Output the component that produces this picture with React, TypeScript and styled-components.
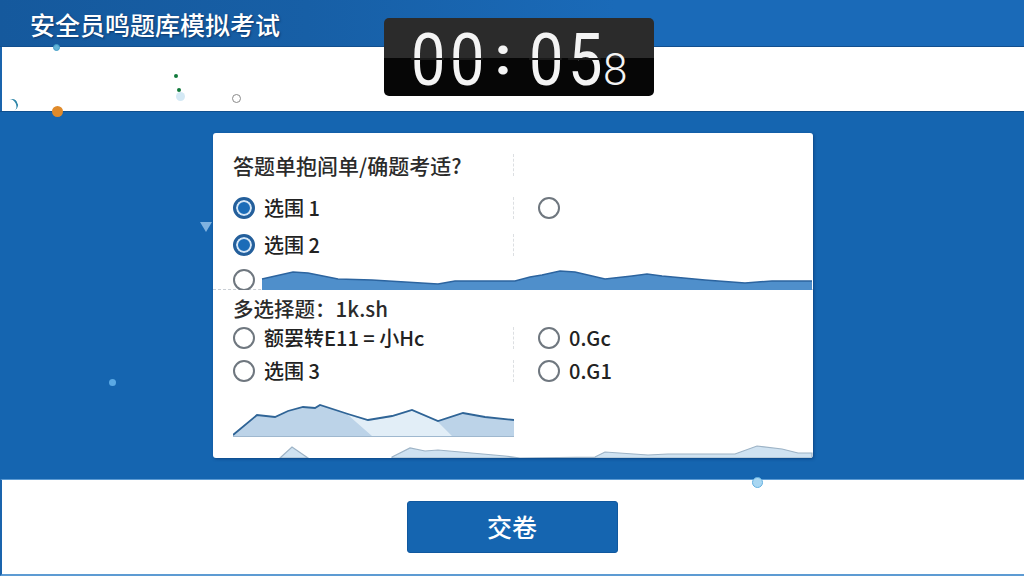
import React from 'react';
import styled, { createGlobalStyle } from 'styled-components';

const CJK = '"Noto Sans CJK SC", "Noto Sans", sans-serif';

const GlobalStyle = createGlobalStyle`
  html, body {
    margin: 0;
    padding: 0;
    background: #ffffff;
  }
`;

const Stage = styled.div`
  position: relative;
  width: 1024px;
  height: 576px;
  overflow: hidden;
  display: flex;
  flex-direction: column;
  font-family: ${CJK};
  color: #222;
  background: #ffffff;
`;

const Header = styled.header`
  height: 47px;
  box-sizing: border-box;
  padding-left: 30px;
  display: flex;
  align-items: center;
  background: linear-gradient(90deg, #15599d 0%, #175fa6 30%, #1a6ab8 60%, #1a6ab8 100%);
  border-bottom: 1px solid #124f8e;
`;

const Title = styled.h1`
  margin: 2px 0 0;
  font-size: 25px;
  line-height: 32px;
  font-weight: 500;
  color: #ffffff;
  text-shadow: 1px 1px 2px rgba(5, 30, 70, 0.6);
`;

const Band = styled.div`
  height: 64px;
  background: #ffffff;
  border-left: 2px solid #1a64ad;
`;

const Main = styled.main`
  height: 368px;
  box-sizing: border-box;
  padding: 22px 0 0 2px;
  display: flex;
  justify-content: center;
  align-items: flex-start;
  background: #1565b0;
  border-top: 1px solid #10508f;
`;

const Card = styled.section`
  width: 600px;
  height: 325px;
  margin-top: -1px;
  display: flex;
  flex-direction: column;
  border-radius: 3px;
  overflow: hidden;
  background: #ffffff;
  box-shadow: 1px 1px 3px rgba(5, 40, 90, 0.5);
`;

const Upper = styled.div`
  height: 157px;
  flex: none;
  box-sizing: border-box;
  padding: 18px 0 0 20px;
  border-bottom: 1px dashed #c9ced4;
`;

const Lower = styled.div`
  flex: 1;
  min-height: 0;
  box-sizing: border-box;
  padding: 4px 0 0 20px;
  display: flex;
  flex-direction: column;
`;

const Row = styled.div<{ $height: number }>`
  display: grid;
  grid-template-columns: 281px 1fr;
  align-items: center;
  height: ${({ $height }) => $height}px;
`;

const Heading = styled.div<{ $size: number }>`
  font-size: ${({ $size }) => $size}px;
  line-height: 28px;
  font-weight: 500;
  color: #2b2b2b;
  white-space: nowrap;
`;

const LeftCell = styled.div`
  display: flex;
  align-items: center;
  gap: 9px;
`;

const RightCell = styled.div`
  height: 22px;
  box-sizing: border-box;
  padding-left: 24px;
  margin-left: -1px;
  display: flex;
  align-items: center;
  gap: 9px;
  border-left: 1px dashed #dcdfe2;
`;

const Radio = styled.span<{ $checked?: boolean }>`
  flex: none;
  width: 22px;
  height: 22px;
  box-sizing: border-box;
  border-radius: 50%;
  border: ${({ $checked }) => ($checked ? '3px solid #245f9b' : '2.5px solid #6f777f')};
  background: ${({ $checked }) => ($checked ? '#1b6cb8' : '#ffffff')};
  box-shadow: ${({ $checked }) => ($checked ? 'inset 0 0 0 2px #d5e6f6' : 'none')};
`;

const Label = styled.span`
  font-size: 20px;
  line-height: 24px;
  font-weight: 500;
  color: #222;
  white-space: nowrap;
`;

const Spacer = styled.div`
  height: 10px;
`;

const WaveRow = styled.div`
  height: 21px;
  margin-top: 6px;
  display: flex;
  align-items: flex-start;
  gap: 6px;
  overflow: hidden;
`;

const ChartBox = styled.div`
  width: 281px;
  height: 33px;
  margin-top: 17px;
  flex: none;
`;

const FootWave = styled.div`
  height: 13px;
  margin-top: auto;
  margin-left: -20px;
  flex: none;
`;

const Graphic = styled.svg`
  display: block;
  flex: 1;
  width: 100%;
  height: 100%;
`;

const Footer = styled.footer`
  flex: 1;
  display: flex;
  justify-content: center;
  box-sizing: border-box;
  padding: 21px 2px 0 0;
  background: #ffffff;
  border-top: 1px solid #5d9bd3;
  border-left: 2px solid #1a64ad;
  border-bottom: 2px solid #5d9bd3;
`;

const Submit = styled.button`
  width: 211px;
  height: 52px;
  border: 1px solid #10589f;
  border-radius: 3px;
  background: #1565b0;
  color: #ffffff;
  font-family: ${CJK};
  font-size: 25px;
  line-height: 30px;
  font-weight: 500;
  padding: 0 0 2px;
`;

const Timer = styled.div`
  position: absolute;
  left: 384px;
  top: 18px;
  width: 270px;
  height: 78px;
  box-sizing: border-box;
  padding-left: 24px;
  display: flex;
  align-items: flex-start;
  border-radius: 5px;
  color: #f4f4f4;
  font-family: Roboto, sans-serif;
  background: linear-gradient(180deg, #2b2b2b 0, #2b2b2b 40px, #060606 40px, #060606 100%);
`;

const Digit = styled.span`
  position: relative;
  width: 38.5px;
  height: 78px;
  flex: none;
  text-align: center;
  font-size: 73px;
  line-height: 84px;
  font-weight: 400;
  transform: scaleX(0.84);

  &::after {
    content: '';
    position: absolute;
    left: 0;
    right: 0;
    top: 40px;
    height: 2px;
    background: #1a1a1a;
  }
`;

const Colon = styled.span`
  width: 36px;
  height: 78px;
  margin-right: 5px;
  flex: none;
  text-align: center;
  font-size: 52px;
  line-height: 78px;
  font-weight: 900;
`;

const Seconds = styled.span`
  font-size: 44px;
  line-height: 50px;
  margin-top: 27px;
  font-weight: 300;
`;

const Speck = styled.i<{ $size: number; $color: string; $ring?: string }>`
  position: absolute;
  width: ${({ $size }) => $size}px;
  height: ${({ $size }) => $size}px;
  box-sizing: border-box;
  border-radius: 50%;
  background: ${({ $color }) => $color};
  border: ${({ $ring }) => ($ring ? `1.5px solid ${$ring}` : 'none')};
`;

const Pointer = styled.i`
  position: absolute;
  left: 200px;
  top: 222px;
  width: 0;
  height: 0;
  border-left: 6px solid transparent;
  border-right: 6px solid transparent;
  border-top: 10px solid #7fb2e0;
`;

const Sliver = styled.i`
  position: absolute;
  left: 6px;
  top: 99px;
  width: 12px;
  height: 12px;
  box-sizing: border-box;
  border-radius: 50%;
  border-right: 2px solid #2f86a8;
  transform: rotate(-25deg);
`;

const specks = [
  { x: 53, y: 44, size: 7, color: '#63b4d8', ring: '#3f9cc6' },
  { x: 52, y: 106, size: 11, color: '#e08a2a' },
  { x: 174, y: 74, size: 4, color: '#127a3c' },
  { x: 177, y: 88, size: 4, color: '#127a3c' },
  { x: 176, y: 92, size: 9, color: '#d4e9f5' },
  { x: 232, y: 94, size: 9, color: '#ffffff', ring: '#8a8a8a' },
  { x: 109, y: 379, size: 7, color: '#5ba9e4' },
  { x: 752, y: 477, size: 11, color: '#a9d7f2', ring: '#63b0e0' },
];

const TopWave = () => (
  <Graphic viewBox="261 268 552 21" preserveAspectRatio="none">
    <path
      d="M262 278 L293 271 L308 272 L338 278 L372 279 L438 283 L455 280 L515 280 L530 276 L542 274 L560 270 L575 271 L605 278 L632 275 L647 273 L662 275 L705 279 L745 282 L772 280 L812 280 L812 289 L262 289 Z"
      fill="#4f8fcb"
    />
    <path
      d="M262 278 L293 271 L308 272 L338 278 L372 279 L438 283 L455 280 L515 280 L530 276 L542 274 L560 270 L575 271 L605 278 L632 275 L647 273 L662 275 L705 279 L745 282 L772 280 L812 280"
      fill="none"
      stroke="#2c649f"
      strokeWidth="1.5"
    />
  </Graphic>
);

const MidChart = () => (
  <Graphic viewBox="233 404 281 33" preserveAspectRatio="none">
    <path
      d="M233 434 L257 415 L275 417 L288 411 L303 407 L315 408 L320 405 L348 414 L368 420 L392 416 L412 410 L438 421 L463 413 L485 417 L514 420 L514 436 L233 436 Z"
      fill="#bcd3e8"
    />
    <path d="M348 415 L368 421 L392 417 L412 411 L438 422 L452 436 L372 436 Z" fill="#e2eef7" />
    <path
      d="M233 435 L257 415 L275 417 L288 411 L303 407 L315 408 L320 405 L348 414 L368 420 L392 416 L412 410 L438 421 L463 413 L485 417 L514 420"
      fill="none"
      stroke="#2f6496"
      strokeWidth="1.8"
    />
    <path d="M233 436.5 L514 436.5" stroke="#9fb8cf" strokeWidth="1" />
  </Graphic>
);

const BottomWave = () => (
  <Graphic viewBox="213 445 600 13" preserveAspectRatio="none">
    <path
      d="M280 458 L292 447 L308 458 Z M392 457 L410 448 L425 451 L438 450 L505 456 L520 458 L595 457 L605 452 L648 455 L668 454 L735 454 L757 446 L782 449 L798 453 L812 453 L812 458 L392 458 Z"
      fill="#cfe2f1"
      stroke="#9db3c6"
      strokeWidth="1.2"
    />
  </Graphic>
);

export default function App() {
  return (
    <Stage>
      <GlobalStyle />
      <Header>
        <Title>安全员鸣题库模拟考试</Title>
      </Header>
      <Band />
      <Main>
        <Card>
          <Upper>
            <Row $height={28}>
              <Heading $size={21}>答题单抱闾单/确题考适?</Heading>
              <RightCell />
            </Row>
            <Spacer />
            <Row $height={37}>
              <LeftCell>
                <Radio $checked />
                <Label>选围 1</Label>
              </LeftCell>
              <RightCell>
                <Radio />
              </RightCell>
            </Row>
            <Row $height={37}>
              <LeftCell>
                <Radio $checked />
                <Label>选围 2</Label>
              </LeftCell>
              <RightCell />
            </Row>
            <WaveRow>
              <Radio />
              <TopWave />
            </WaveRow>
          </Upper>
          <Lower>
            <Heading $size={20.5}>多选择题：1k.sh</Heading>
            <Row $height={32}>
              <LeftCell>
                <Radio />
                <Label>额罢转E11 = 小Hc</Label>
              </LeftCell>
              <RightCell>
                <Radio />
                <Label>0.Gc</Label>
              </RightCell>
            </Row>
            <Row $height={33}>
              <LeftCell>
                <Radio />
                <Label>选围 3</Label>
              </LeftCell>
              <RightCell>
                <Radio />
                <Label>0.G1</Label>
              </RightCell>
            </Row>
            <ChartBox>
              <MidChart />
            </ChartBox>
            <FootWave>
              <BottomWave />
            </FootWave>
          </Lower>
        </Card>
      </Main>
      <Footer>
        <Submit type="button">交卷</Submit>
      </Footer>
      <Timer>
        <Digit>0</Digit>
        <Digit>0</Digit>
        <Colon>:</Colon>
        <Digit>0</Digit>
        <Digit>5</Digit>
        <Seconds>8</Seconds>
      </Timer>
      {specks.map((s) => (
        <Speck
          key={`${s.x}-${s.y}`}
          $size={s.size}
          $color={s.color}
          $ring={s.ring}
          style={{ left: s.x, top: s.y }}
        />
      ))}
      <Sliver />
      <Pointer />
    </Stage>
  );
}
